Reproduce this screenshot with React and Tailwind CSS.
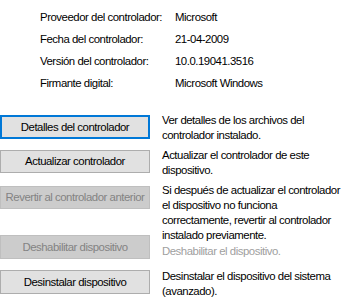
export default function App() {
  const info = [
    ["Proveedor del controlador:", "Microsoft"],
    ["Fecha del controlador:", "21-04-2009"],
    ["Versión del controlador:", "10.0.19041.3516"],
    ["Firmante digital:", "Microsoft Windows"],
  ];
  const btn = "w-[150px] shrink-0 flex items-center justify-center border whitespace-nowrap";
  return (
    <div className="w-[350px] h-[300px] bg-white overflow-hidden text-[11.4px] tracking-[-0.47px] text-black" style={{ fontFamily: '"Liberation Sans", Arial, sans-serif' }}>
      <div className="pt-[6px] pl-[40px]">
        {info.map(([l, v]) => (
          <div key={l} className="flex h-[22.3px] items-center">
            <div className="w-[135px]">{l}</div>
            <div>{v}</div>
          </div>
        ))}
      </div>
      <div className="mt-[20px]">
        <div className="flex h-[35px]">
          <div className={btn + " h-[24px] bg-[#e1e1e1] border-2 border-[#0078d7]"}>Detalles del controlador</div>
          <div className="ml-[12px] -mt-[2px] leading-[14.7px] w-[180px]">Ver detalles de los archivos del controlador instalado.</div>
        </div>
        <div className="flex h-[36px]">
          <div className={btn + " h-[23px] bg-[#e1e1e1] border-[#adadad]"}>Actualizar controlador</div>
          <div className="ml-[12px] -mt-[2px] leading-[14.8px] w-[180px]">Actualizar el controlador de este dispositivo.</div>
        </div>
        <div className="flex h-[49px]">
          <div className={btn + " h-[23px] bg-[#cccccc] border-[#bfbfbf] text-[#838383]"}>Revertir al controlador anterior</div>
          <div className="ml-[12px] -mt-[3px] leading-[14.8px] w-[180px]">Si después de actualizar el controlador el dispositivo no funciona correctamente, revertir al controlador instalado previamente.</div>
        </div>
        <div className="flex h-[35px]">
          <div className={btn + " h-[24px] bg-[#cccccc] border-[#bfbfbf] text-[#838383]"}>Deshabilitar dispositivo</div>
          <div className="ml-[12px] mt-[9px] leading-[14.5px] w-[180px] text-[#a0a0a0]">Deshabilitar el dispositivo.</div>
        </div>
        <div className="flex h-[35px]">
          <div className={btn + " h-[24px] bg-[#e1e1e1] border-[#adadad]"}>Desinstalar dispositivo</div>
          <div className="ml-[12px] -mt-[1px] leading-[15px] w-[180px]">Desinstalar el dispositivo del sistema (avanzado).</div>
        </div>
      </div>
    </div>
  );
}
